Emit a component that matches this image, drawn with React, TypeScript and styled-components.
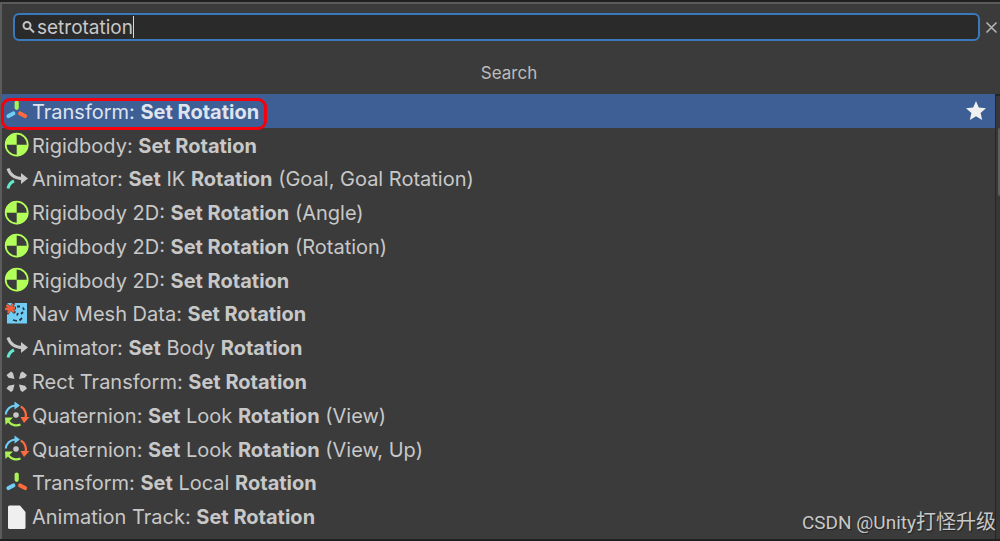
import React, { useState } from "react";
import styled, { createGlobalStyle } from "styled-components";

const GlobalStyle = createGlobalStyle`
  * { box-sizing: border-box; }
  body { margin: 0; background: #3b3b3b; font-family: Inter, "Noto Sans CJK SC", sans-serif; color: #c8c8c8; }
`;

const Backdrop = styled.div`
  min-height: 100vh;
  display: flex;
  flex-direction: column;
  background: #202020;
  padding: 2px 0;
`;

const Panel = styled.main`
  flex: 1;
  display: flex;
  flex-direction: column;
  background: #3b3b3b;
  border: 2px solid #5c5c5c;
  border-width: 2px 0 0 2px;
`;

const SearchBar = styled.form`
  display: flex;
  align-items: center;
  gap: 5px;
  padding: 9px 2px 0 11px;
`;

const SearchField = styled.label`
  flex: 1;
  height: 28px;
  display: flex;
  align-items: center;
  padding-left: 7px;
  border: 2px solid #3a79bb;
  border-radius: 6px;
  background: #2a2a2a;
`;

const SearchInput = styled.input`
  field-sizing: content;
  margin-left: 2px;
  padding: 2px 0 0;
  border: 0;
  outline: 0;
  background: none;
  color: #c8c8c8;
  font: 400 19px/22px Inter, sans-serif;
`;

const Caret = styled.span`
  width: 1px;
  height: 22px;
  background: #d8d8d8;
`;

const IconButton = styled.button`
  display: flex;
  padding: 0;
  border: 0;
  background: none;
  color: #b4b4b4;
`;

const Heading = styled.h1`
  margin: 21px 0 10px;
  padding-left: 16px;
  color: #bcbcbc;
  font-size: 17px;
  line-height: 22px;
  font-weight: 400;
  text-align: center;
`;

const Results = styled.div`
  flex: 1;
  display: flex;
`;

const List = styled.ul`
  flex: 1;
  display: grid;
  grid-auto-rows: 1fr;
  margin: 0;
  padding: 0 0 6px;
  list-style: none;
`;

const Row = styled.li<{ $selected?: boolean }>`
  position: relative;
  display: flex;
  align-items: center;
  gap: 2px;
  padding: 2px 7px 0 1px;
  background: ${(p) => (p.$selected ? "#3e5f96" : "transparent")};
  color: ${(p) => (p.$selected ? "#dfe4ee" : "#c8c8c8")};
  font-size: 20px;
  line-height: 24px;
  white-space: nowrap;
  svg { flex: none; }
  strong { font-weight: 700; }
`;

const Label = styled.span`
  flex: 1;
`;

const Outline = styled.span`
  position: absolute;
  left: -1px;
  top: 4px;
  bottom: -2px;
  width: 266px;
  border: 3px solid #f5000c;
  border-radius: 9px;
`;

const ScrollTrack = styled.div`
  width: 5px;
  padding: 32px 0 0 2px;
  border: 1px solid #252525;
  border-width: 2px 0 0 1px;
  background: #373737;
`;

const ScrollThumb = styled.div`
  height: 68px;
  border-radius: 2px 0 0 2px;
  background: #5e5e5e;
`;

const Watermark = styled.footer`
  position: absolute;
  right: 4px;
  bottom: 6px;
  color: #c8c8c8;
  font: 400 19px/24px Roboto, "Noto Sans CJK SC", sans-serif;
  text-shadow: 1px 1px 1px #222;
`;

const Han = styled.span`
  font-size: 20px;
`;

type IconName = "transform" | "body" | "animator" | "nav" | "rect" | "quaternion" | "file";

const art: Record<IconName, React.ReactNode> = {
  transform: (
    <g strokeWidth="4.200" strokeLinecap="round">
      <path d="M13.700 4.500V9.800" stroke="#a9f255" />
      <path d="M10.300 15.500L5.500 18" stroke="#72cdf4" />
      <path d="M17.200 15.500L22 18" stroke="#ff6b3d" />
    </g>
  ),
  body: (
    <>
      <circle cx="13.700" cy="12.700" r="11" fill="none" stroke="#b2ff59" strokeWidth="1.800" />
      <path d="M13.700 12.700V1.200A11.500 11.500 0 0 0 2.200 12.700ZM13.700 12.700V24.200A11.500 11.500 0 0 0 25.200 12.700Z" fill="#b2ff59" />
    </>
  ),
  animator: (
    <g fill="none" strokeWidth="3">
      <path d="M5 2.500C7 9 11 12.500 20 12.500" stroke="#c8c8c8" />
      <path d="M18 7L25 12.500L18 18Z" fill="#c8c8c8" stroke="none" />
      <path d="M5 22.500C5.500 19.500 7.500 16.500 11 15" stroke="#62e8cf" />
    </g>
  ),
  nav: (
    <>
      <path d="M4 2H24V22.500H4Z" fill="#72cdf4" />
      <path d="M14 5.500H17M20 6.500L21 9M20 11L18 13M15 12L14 14.500M19 17L16.500 19.500M14 20L10 19" fill="none" stroke="#26343b" strokeWidth="1.800" />
      <path d="M3 3L12 12M11 2L4 13M1 8L13 7" stroke="#3b3b3b" strokeWidth="3" />
      <path d="M3.500 4L11 11M10 3L5 12M2 8L12 7" stroke="#ef5e38" strokeWidth="2.400" />
    </>
  ),
  rect: (
    <path
      fill="#c8c8c8"
      d="M3.500 6L8 2.500L10 4L11.500 10L5.500 8.800ZM24 6L19.500 2.500L17.500 4L16 10L22 8.800ZM3.500 19.500L8 23L10 21.500L11.500 15.500L5.500 16.700ZM24 19.500L19.500 23L17.500 21.500L16 15.500L22 16.700Z"
    />
  ),
  quaternion: (
    <>
      <circle cx="13" cy="13" r="2.800" fill="#c8c8c8" />
      <g fill="none" strokeWidth="2.200">
        <path d="M2.800 12.500A10 10 0 0 1 12 3.500" stroke="#72cdf4" />
        <path d="M17.800 4.500A10 10 0 0 1 22.500 16" stroke="#ff6b3d" />
        <path d="M17.500 22.500A10 10 0 0 1 5.500 19.500" stroke="#a9f255" />
      </g>
      <path d="M11.500 -.5V7.500L17 3.500Z" fill="#72cdf4" />
      <path d="M17.500 15H26.500L21 21Z" fill="#ff6b3d" />
      <path d="M2 15.500H10L2.500 23Z" fill="#a9f255" />
    </>
  ),
  file: <path d="M6.500 1.500H17L22.500 8V23.500a1.500 1.500 0 0 1-1.500 1.500h-14.500A1.500 1.500 0 0 1 5 23.500V3A1.500 1.500 0 0 1 6.500 1.500Z" fill="#efefef" />,
};

const Glyph = ({ name }: { name: IconName }) => (
  <svg width="27" height="27" viewBox="0 0 27 27" overflow="visible" aria-hidden="true">{art[name]}</svg>
);

const results: [IconName, string][] = [
  ["transform", "Transform: *Set Rotation*"],
  ["body", "Rigidbody: *Set Rotation*"],
  ["animator", "Animator: *Set* IK *Rotation* (Goal, Goal Rotation)"],
  ["body", "Rigidbody 2D: *Set Rotation* (Angle)"],
  ["body", "Rigidbody 2D: *Set Rotation* (Rotation)"],
  ["body", "Rigidbody 2D: *Set Rotation*"],
  ["nav", "Nav Mesh Data: *Set Rotation*"],
  ["animator", "Animator: *Set* Body *Rotation*"],
  ["rect", "Rect Transform: *Set Rotation*"],
  ["quaternion", "Quaternion: *Set* Look *Rotation* (View)"],
  ["quaternion", "Quaternion: *Set* Look *Rotation* (View, Up)"],
  ["transform", "Transform: *Set* Local *Rotation*"],
  ["file", "Animation Track: *Set Rotation*"],
];

const highlight = (text: string) =>
  text.split("*").map((part, i) => (i % 2 ? <strong key={i}>{part}</strong> : part));

export default function App() {
  const [query, setQuery] = useState("setrotation");
  return (
    <Backdrop>
      <GlobalStyle />
      <Panel>
        <SearchBar onSubmit={(e) => e.preventDefault()}>
          <SearchField>
            <svg width="13" height="14" viewBox="0 0 13 14" fill="none" stroke="#c4c4c4" strokeWidth="2" aria-hidden="true">
              <circle cx="5" cy="5.500" r="3.500" />
              <path d="M7.500 8L12 12.500" />
            </svg>
            <SearchInput aria-label="Search nodes" value={query} onChange={(e) => setQuery(e.target.value)} />
            <Caret />
          </SearchField>
          <IconButton type="button" aria-label="Close" onClick={() => setQuery("")}>
            <svg width="13" height="13" viewBox="0 0 13 13" stroke="currentColor" strokeWidth="1.600">
              <path d="M1.500 1.500L11.500 11.500M11.500 1.500L1.500 11.500" />
            </svg>
          </IconButton>
        </SearchBar>
        <Heading>Search</Heading>
        <Results>
          <List>
            {results.map(([icon, text], i) => (
              <Row key={i} $selected={i === 0}>
                <Glyph name={icon} />
                <Label>{highlight(text)}</Label>
                {i === 0 && (
                  <>
                    <IconButton type="button" aria-label="Favorite">
                      <svg width="24" height="24" viewBox="0 0 24 24" fill="#f0f0f0">
                        <path d="M12 1L14.800 7.500L22 8.200L16.600 13L18.200 20L12 16.300L5.800 20L7.400 13L2 8.200L9.200 7.500Z" />
                      </svg>
                    </IconButton>
                    <Outline />
                  </>
                )}
              </Row>
            ))}
          </List>
          <ScrollTrack>
            <ScrollThumb />
          </ScrollTrack>
        </Results>
      </Panel>
      <Watermark>CSDN @Unity<Han>打怪升级</Han></Watermark>
    </Backdrop>
  );
}
